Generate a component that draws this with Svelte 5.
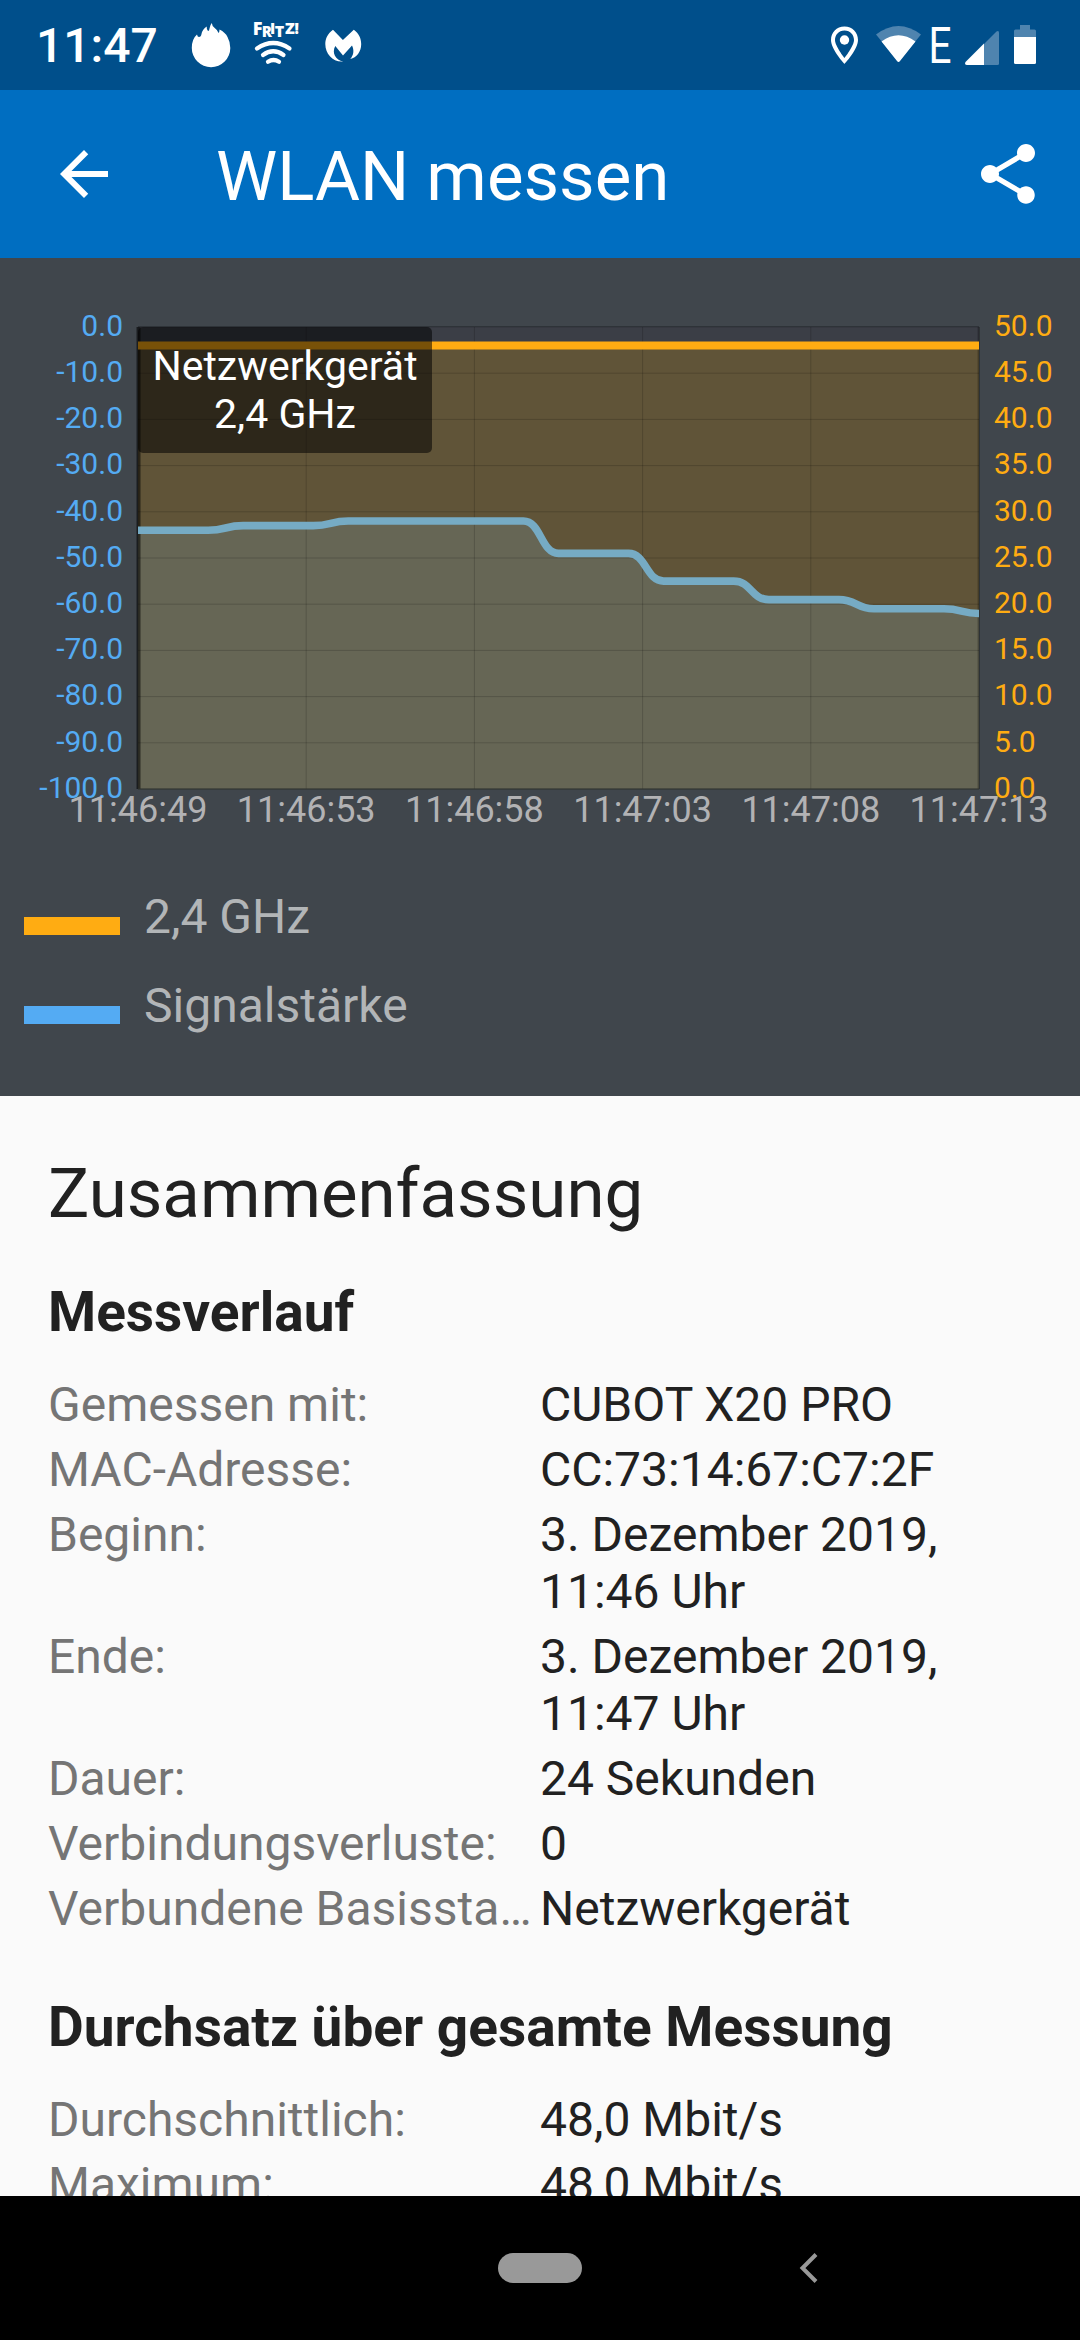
<script lang="ts">
	type Row = { label: string; value: string };

	const plot = { left: 138, right: 979, top: 69, bottom: 531 };
	const width = plot.right - plot.left;
	const height = plot.bottom - plot.top;

	const times = ['11:46:49', '11:46:53', '11:46:58', '11:47:03', '11:47:08', '11:47:13'];
	const steps = Array.from({ length: 11 }, (_, i) => i);

	// [second, dBm]
	const signal = [
		[0, -44],
		[2, -44],
		[3, -43],
		[5, -43],
		[6, -42],
		[11, -42],
		[12, -49],
		[14, -49],
		[15, -55],
		[17, -55],
		[18, -59],
		[20, -59],
		[21, -61],
		[23, -61],
		[24, -62]
	];

	const gx = (i: number) => plot.left + (i * width) / 5;
	const gy = (i: number) => plot.top + (i * height) / 10;
	const px = (s: number) => plot.left + (s * width) / 24;
	const py = (dbm: number) => plot.top + (-dbm * height) / 100;

	function smooth(points: number[][]): string {
		let d = `M${px(points[0][0])} ${py(points[0][1])}`;
		for (let i = 1; i < points.length; i++) {
			const [x0, y0] = [px(points[i - 1][0]), py(points[i - 1][1])];
			const [x1, y1] = [px(points[i][0]), py(points[i][1])];
			const mid = (x0 + x1) / 2;
			d += ` C${mid} ${y0} ${mid} ${y1} ${x1} ${y1}`;
		}
		return d;
	}

	const line = smooth(signal);
	const area = `${line} V${plot.bottom} H${plot.left} Z`;
	const rateY = plot.top + height * 0.04;

	const sections: { title: string; rows: Row[] }[] = [
		{
			title: 'Messverlauf',
			rows: [
				{ label: 'Gemessen mit:', value: 'CUBOT X20 PRO' },
				{ label: 'MAC-Adresse:', value: 'CC:73:14:67:C7:2F' },
				{ label: 'Beginn:', value: '3. Dezember 2019,\n11:46 Uhr' },
				{ label: 'Ende:', value: '3. Dezember 2019,\n11:47 Uhr' },
				{ label: 'Dauer:', value: '24 Sekunden' },
				{ label: 'Verbindungsverluste:', value: '0' },
				{ label: 'Verbundene Basissta…', value: 'Netzwerkgerät' }
			]
		},
		{
			title: 'Durchsatz über gesamte Messung',
			rows: [
				{ label: 'Durchschnittlich:', value: '48,0 Mbit/s' },
				{ label: 'Maximum:', value: '48,0 Mbit/s' }
			]
		}
	];
</script>

<div class="screen">
	<div class="status">
		<span class="clock">11:47</span>
		<svg class="notes" width="180" height="90" viewBox="186 0 180 90" fill="#fff" aria-hidden="true">
			<path d="M197 34.500 Q197.500 37 199 37 Q201 37 201.500 34 Q202.500 29 206.700 26.500 Q206.500 30 208 31 Q209.300 31 209.500 28.500 Q210 25 211.800 23 Q212 26 214.700 28 Q217.500 30 218.600 33 Q219.500 32 219.500 29.500 Q225.500 32.500 227.500 37 Q230.300 42 230.300 48 A19.200 19.200 0 0 1 191.800 48 Q191.800 39 197 34.500Z" />
			<g class="fritz">
				<text x="252.800" y="35" font-size="18">F</text>
				<text x="261.800" y="37" font-size="15">R</text>
				<text x="270" y="34" font-size="15">I</text>
				<text x="274.800" y="37" font-size="16">T</text>
				<text x="285" y="33.500" font-size="16">Z</text>
				<text x="294.500" y="33.500" font-size="15">!</text>
			</g>
			<g fill="none" stroke="#fff" stroke-width="4.200" stroke-linecap="round">
				<path d="M257 48.500 Q273.200 37.500 289.500 48.500" />
				<path d="M263 55 Q273.200 47.500 283.500 55" />
				<path d="M268 61.800 Q273.500 58.200 279 61.800" />
			</g>
			<path d="M333 29.700 L342.900 40 L353.800 29.700 C359 33.500 361.200 38.500 361.200 44 C361.200 52 356.500 57.500 350.300 59 C353.800 55 354.300 50 352 45.500 L343 55.500 L335.300 46 C331.500 53 335.500 60 343.300 61.500 C333 62.500 325.300 54 325.300 44 C325.300 38.500 327.800 33.500 333 29.700Z" />
		</svg>
		<svg class="system" width="220" height="90" viewBox="820 0 220 90" fill="#fff" aria-hidden="true">
			<path fill-rule="evenodd" d="M844.500 26.500 C836.500 26.500 831 32.500 831 40 C831 49.500 844.500 64 844.500 64 C844.500 64 858 49.500 858 40 C858 32.500 852.500 26.500 844.500 26.500Z M844.500 30.500 C850.500 30.500 854 35 854 40 C854 46 844.500 58 844.500 58 C844.500 58 835 46 835 40 C835 35 838.500 30.500 844.500 30.500Z" />
			<circle cx="844.500" cy="40" r="4.700" />
			<path class="dim" d="M876 34.500 Q898.500 17.500 921 34.500 L898.500 62Z" />
			<path d="M881.500 41.500 Q898.500 29 915.500 41.500 L900 61 Q898.500 63 897 61Z" />
			<text class="edge" x="928.500" y="63" textLength="23" lengthAdjust="spacingAndGlyphs">E</text>
			<path class="dim" d="M984 65 V44 L996.500 31.500 Q999 30 999 33 V63.500 Q999 65 997.500 65Z" />
			<path d="M984 43.500 V65 H967 Q964 64.500 965.500 62Z" />
			<path class="dim" d="M1014 37 V31 Q1014 29.500 1015.500 29.500 H1020 V25 H1030 V29.500 H1034.500 Q1036 29.500 1036 31 V37Z" />
			<path d="M1014 37 H1036 V62.500 Q1036 64 1034.500 64 H1015.500 Q1014 64 1014 62.500Z" />
		</svg>
	</div>

	<header class="appbar">
		<svg width="72" height="72" viewBox="0 0 24 24" fill="#fff" aria-hidden="true">
			<path d="M20 11H7.830l5.590-5.590L12 4l-8 8 8 8 1.410-1.410L7.830 13H20v-2z" />
		</svg>
		<h1>WLAN messen</h1>
		<svg width="72" height="72" viewBox="0 0 24 24" fill="#fff" aria-hidden="true">
			<path d="M18 16.080c-.76 0-1.440.3-1.960.77L8.910 12.700c.05-.23.09-.46.09-.7s-.04-.47-.09-.7l7.050-4.110c.54.5 1.250.81 2.040.81 1.660 0 3-1.340 3-3s-1.340-3-3-3-3 1.340-3 3c0 .24.04.47.09.7L8.040 9.810C7.500 9.310 6.790 9 6 9c-1.660 0-3 1.340-3 3s1.340 3 3 3c.79 0 1.500-.31 2.040-.81l7.120 4.160c-.05.21-.08.43-.08.65 0 1.610 1.310 2.920 2.920 2.920 1.610 0 2.920-1.310 2.920-2.920s-1.310-2.920-2.920-2.920z" />
		</svg>
	</header>

	<section class="chart">
		<svg class="graph" width="1080" height="600" viewBox="0 0 1080 600">
			<rect x={plot.left} y={plot.top} {width} {height} fill="#3b3e46" />
			<rect x={plot.left} y={rateY} {width} height={plot.bottom - rateY} fill="#605438" />
			<path d={area} fill="#666655" />

			<g class="grid">
				{#each steps as i (i)}
					<path d="M{plot.left} {gy(i)} H{plot.right}" />
				{/each}
				{#each times as t, i (t)}
					<path d="M{gx(i)} {plot.top} V{plot.bottom}" />
				{/each}
			</g>
			<rect x="136.500" y={plot.top} width="4" {height} fill="#000" opacity="0.55" />
			<rect x="977.500" y={plot.top} width="2.500" {height} fill="#000" opacity="0.22" />
			<rect x={plot.left} y="68" {width} height="1" fill="#2e3338" />
			<rect x={plot.left} y="530.500" {width} height="1" fill="#333733" />

			<path d="M{plot.left} {rateY} H{plot.right}" stroke="#ffac12" stroke-width="8" />
			<path d={line} fill="none" stroke="#76abc4" stroke-width="7.600" />

			<g class="tick dbm">
				{#each steps as i (i)}
					<text x="123" y={gy(i) + 8.700}>{i === 0 ? '0.0' : `-${i * 10}.0`}</text>
				{/each}
			</g>
			<g class="tick rate">
				{#each steps as i (i)}
					<text x="994" y={gy(i) + 8.700}>{(50 - i * 5).toFixed(1)}</text>
				{/each}
			</g>
			<g class="time">
				{#each times as t, i (t)}
					<text x={gx(i)} y="564">{t}</text>
				{/each}
			</g>
		</svg>
		<div class="marker">Netzwerkgerät<br />2,4 GHz</div>

		<ul class="legend">
			<li><i class="swatch orange"></i>2,4 GHz</li>
			<li><i class="swatch blue"></i>Signalstärke</li>
		</ul>
	</section>

	<main class="summary">
		<h2>Zusammenfassung</h2>
		{#each sections as s (s.title)}
			<h3>{s.title}</h3>
			<dl>
				{#each s.rows as r (r.label)}
					<dt>{r.label}</dt>
					<dd>{r.value}</dd>
				{/each}
			</dl>
		{/each}
	</main>

	<nav class="navbar">
		<span class="home"></span>
		<svg class="back" width="20" height="32" viewBox="0 0 20 32" aria-hidden="true">
			<path d="M17 2.500 L3.500 16 L17 29.500" fill="none" stroke="#999" stroke-width="4" />
		</svg>
	</nav>
</div>

<style>
	:global(body) {
		margin: 0;
		background: #000;
	}
	.screen {
		width: 1080px;
		height: 2340px;
		display: flex;
		flex-direction: column;
		overflow: hidden;
		font-family: Roboto, 'Liberation Sans', sans-serif;
		color: #212121;
	}
	svg {
		display: block;
		flex-shrink: 0;
	}

	.status {
		height: 90px;
		flex-shrink: 0;
		display: flex;
		align-items: center;
		background: #004f8b;
		color: #fff;
	}
	.clock {
		width: 150px;
		padding-left: 36px;
		font-size: 48px;
		font-weight: 500;
		line-height: 90px;
		padding-top: 2px;
	}
	.system {
		margin-left: auto;
		margin-right: 40px;
	}
	.fritz {
		font-family: 'Open Sans', sans-serif;
		font-weight: 800;
	}
	.dim {
		fill: #4f84af;
	}
	.edge {
		font-size: 50px;
	}

	.appbar {
		height: 168px;
		flex-shrink: 0;
		box-sizing: border-box;
		padding: 0 36px 0 48px;
		display: flex;
		align-items: center;
		background: #006ec1;
		color: #fff;
	}
	h1 {
		flex: 1;
		margin: 0 0 0 96px;
		padding-top: 5px;
		font-size: 69px;
		font-weight: 400;
	}

	.chart {
		position: relative;
		height: 838px;
		flex-shrink: 0;
		background: #40464c;
	}
	.grid path {
		stroke: #000;
		stroke-opacity: 0.17;
		stroke-width: 1;
	}
	.tick {
		font-size: 30px;
	}
	.dbm {
		fill: #54abf3;
		text-anchor: end;
	}
	.rate {
		fill: #ffac12;
	}
	.time {
		fill: #b2b2b4;
		font-size: 36px;
		text-anchor: middle;
	}
	/* floats over the plot at the selected access point */
	.marker {
		position: absolute;
		left: 138px;
		top: 69px;
		width: 294px;
		height: 126px;
		box-sizing: border-box;
		padding-top: 15px;
		border-radius: 5px;
		background: rgba(0, 0, 0, 0.53);
		color: #fff;
		font-size: 41px;
		line-height: 48px;
		text-align: center;
	}
	.legend {
		margin: 0;
		padding: 14px 24px;
		list-style: none;
	}
	.legend li {
		height: 89px;
		display: flex;
		align-items: center;
		gap: 24px;
		color: #b2b5b7;
		font-size: 48px;
	}
	.swatch {
		width: 96px;
		height: 18px;
		margin-top: 18px;
	}
	.orange {
		background: #ffac12;
	}
	.blue {
		background: #54abf3;
	}

	.summary {
		flex: 1;
		min-height: 0;
		overflow: hidden;
		padding: 0 48px;
		background: #fafafa;
	}
	h2 {
		margin: 58px 0 0;
		font-size: 69px;
		font-weight: 400;
		line-height: 80px;
	}
	h3 {
		margin: 58px 0 0;
		font-size: 55px;
		font-weight: 700;
		line-height: 64px;
	}
	h2 + h3 {
		margin-top: 46px;
	}
	dl {
		margin: 32px 0 0;
		display: grid;
		grid-template-columns: 492px 1fr;
		row-gap: 8px;
		font-size: 48px;
		line-height: 57px;
	}
	dt {
		color: #757575;
		white-space: nowrap;
	}
	dd {
		margin: 0;
		white-space: pre-line;
	}

	.navbar {
		height: 144px;
		flex-shrink: 0;
		display: grid;
		grid-template-columns: 1fr 84px 1fr;
		align-items: center;
		background: #000;
	}
	.home {
		grid-column: 2;
		height: 30px;
		border-radius: 15px;
		background: #999;
	}
	.back {
		margin-left: 217px;
	}
</style>
